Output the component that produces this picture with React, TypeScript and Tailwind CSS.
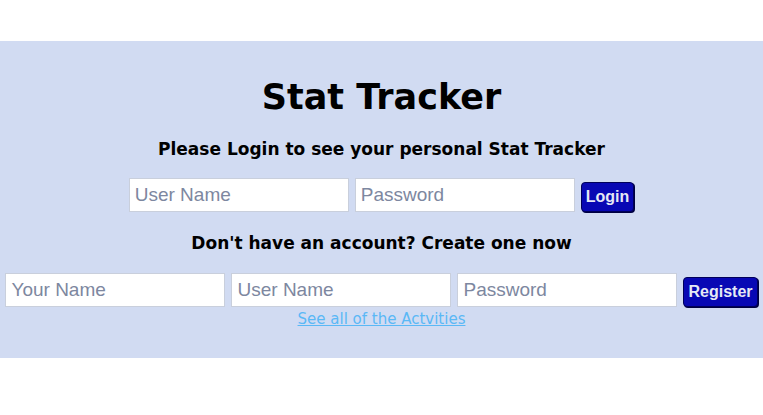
import React from "react";

export default function App() {
  const inputCls =
    "w-[220px] h-[34px] bg-white border border-[#c9cfdc] px-[5px] text-[19px] text-black placeholder:text-[#7d87a0] outline-none [font-family:'Liberation_Sans',Arial,sans-serif]";
  const btnCls =
    "h-[30px] rounded-[4px] bg-[#0808b4] border border-[#00005a] text-[#e6e9f5] text-[16px] font-bold px-[4px] [font-family:'Liberation_Sans',Arial,sans-serif] shadow-[1px_1px_0_#000040]";
  return (
    <div className="w-[763px] h-[415px] bg-white pt-[41px] [font-family:'DejaVu_Sans',Verdana,sans-serif]">
      <div className="h-[317px] bg-[#d1dbf2] flex flex-col items-center">
        <h1 className="mt-[34px] text-[35px] leading-[44px] font-bold text-black">Stat Tracker</h1>
        <p className="mt-[19px] text-[17px] leading-[22px] font-bold text-black">
          Please Login to see your personal Stat Tracker
        </p>
        <div className="mt-[18px] flex items-center gap-[6px]">
          <input className={inputCls} placeholder="User Name" />
          <input className={inputCls} placeholder="Password" type="password" />
          <button className={`${btnCls} mt-[4px]`}>Login</button>
        </div>
        <p className="mt-[20px] text-[17px] leading-[22px] font-bold text-black">
          Don't have an account? Create one now
        </p>
        <div className="mt-[19px] flex items-center gap-[6px]">
          <input className={inputCls} placeholder="Your Name" />
          <input className={inputCls} placeholder="User Name" />
          <input className={inputCls} placeholder="Password" type="password" />
          <button className={`${btnCls} mt-[4px]`}>Register</button>
        </div>
        <a href="#" className="mt-[2px] text-[15px] leading-[20px] text-[#5ab8f6] underline">
          See all of the Actvities
        </a>
      </div>
    </div>
  );
}
